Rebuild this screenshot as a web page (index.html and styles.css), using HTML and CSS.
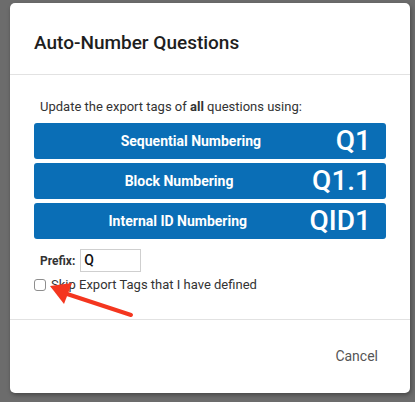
FILE: index.html
```html
<!DOCTYPE html>
<html>
<head>
<meta charset="utf-8">
<link rel="stylesheet" href="styles.css">
</head>
<body>
<div class="modal">
  <div class="modal-header">
    <h1 class="title">Auto-Number Questions</h1>
  </div>
  <div class="modal-body">
    <p class="intro">Update the export tags of <b>all</b> questions using:</p>
    <div class="options">
      <div class="option"><span class="option-label">Sequential Numbering</span><span class="option-sample">Q1</span></div>
      <div class="option"><span class="option-label">Block Numbering</span><span class="option-sample">Q1.1</span></div>
      <div class="option"><span class="option-label">Internal ID Numbering</span><span class="option-sample">QID1</span></div>
    </div>
    <div class="prefix-row">
      <label class="prefix-label">Prefix:</label>
      <span class="prefix-input">Q</span>
    </div>
    <div class="skip-row">
      <span class="checkbox"></span>
      <span class="skip-text">Skip Export Tags that I have defined</span>
      <svg class="arrow" width="100" height="40" viewBox="0 0 100 40">
        <line x1="95" y1="36" x2="22" y2="12" stroke="#f4361f" stroke-width="4" stroke-linecap="round"/>
        <polygon points="14,7 36,4 28,25" fill="#f4361f"/>
      </svg>
    </div>
  </div>
  <div class="modal-footer">
    <span class="cancel">Cancel</span>
  </div>
</div>
</body>
</html>
```
FILE: styles.css
```css
html, body {
  margin: 0;
  padding: 0;
}
body {
  background: #6c6c6c;
  width: 415px;
  height: 402px;
  overflow: hidden;
  font-family: Roboto, "Liberation Sans", sans-serif;
  padding: 3px 0 0 10px;
  box-sizing: border-box;
}
.modal {
  width: 400px;
  height: 390px;
  background: #fff;
  border-radius: 5px;
  box-shadow: 1px 2px 4px rgba(0,0,0,0.35);
  display: flex;
  flex-direction: column;
}
.modal-header {
  height: 72px;
  border-bottom: 1px solid #e2e2e2;
  display: flex;
  align-items: center;
  padding-left: 24px;
  box-sizing: border-box;
}
.title {
  margin: 0;
  font-size: 19px;
  font-weight: 500;
  color: #1e1e1e;
  position: relative;
  top: 4px;
}
.modal-body {
  height: 245px;
  box-sizing: border-box;
  border-bottom: 1px solid #e2e2e2;
  padding: 24px 24px 0 24px;
}
.intro {
  margin: 0 0 8px 6px;
  font-size: 13px;
  line-height: 16px;
  color: #333;
}
.intro b {
  font-weight: 700;
}
.options {
  display: flex;
  flex-direction: column;
  gap: 4px;
}
.option {
  height: 36px;
  background: #0a6eb6;
  border-radius: 3px;
  display: flex;
  align-items: center;
  padding: 0 15px 0 12px;
  color: #fff;
}
.option-label {
  flex: 1;
  text-align: center;
  font-size: 14px;
  font-weight: 700;
}
.option-sample {
  font-size: 28px;
  font-weight: 500;
  line-height: 36px;
}
.prefix-row {
  display: flex;
  align-items: center;
  margin: 10px 0 0 6px;
  gap: 5px;
}
.prefix-label {
  font-size: 12px;
  font-weight: 700;
  color: #333;
}
.prefix-input {
  width: 61px;
  height: 23px;
  box-sizing: border-box;
  border: 1px solid #cfcfcf;
  font-size: 14px;
  font-weight: 500;
  line-height: 21px;
  padding-left: 3px;
  color: #111;
}
.skip-row {
  position: relative;
  display: flex;
  align-items: center;
  gap: 5px;
  margin-top: 5px;
}
.checkbox {
  width: 12px;
  height: 12px;
  box-sizing: border-box;
  border: 1px solid #8e8e8e;
  border-radius: 3px;
  background: #fff;
}
.skip-text {
  font-size: 13px;
  color: #333;
}
.arrow {
  position: absolute;
  left: 2px;
  top: 2px;
}
.modal-footer {
  flex: 1;
  display: flex;
  align-items: center;
  justify-content: flex-end;
  padding-right: 32px;
}
.cancel {
  font-size: 14px;
  color: #555;
  position: relative;
  top: -1px;
}
```
